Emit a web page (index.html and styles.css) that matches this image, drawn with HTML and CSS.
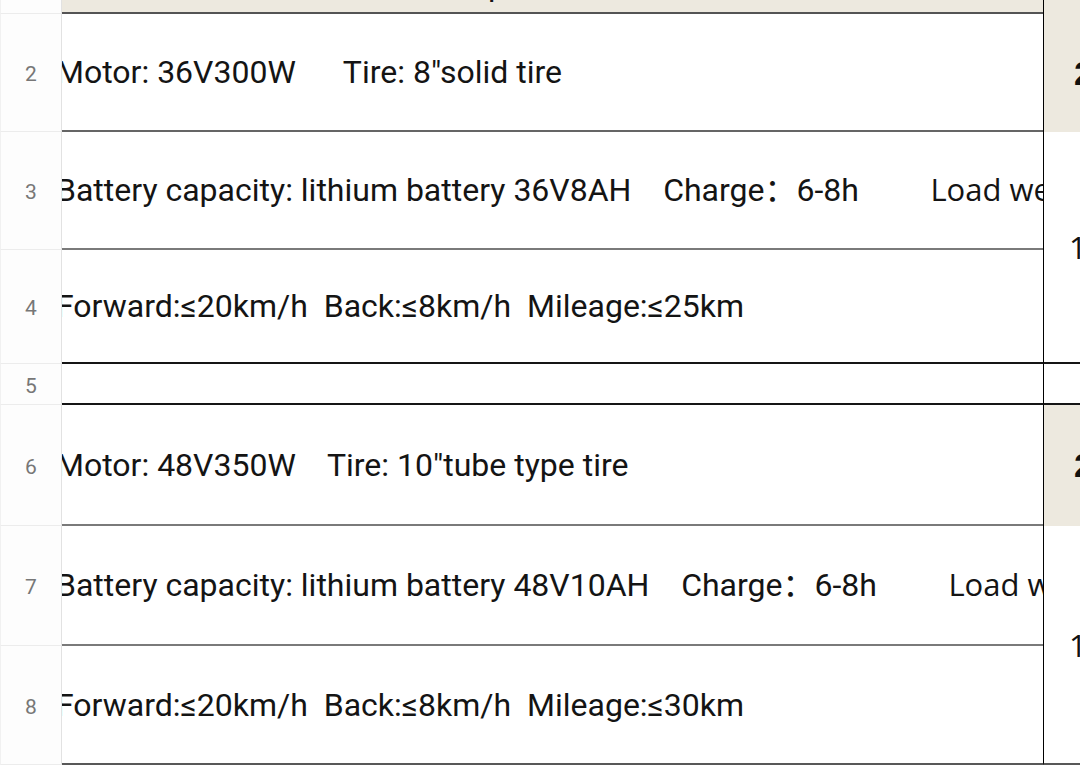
FILE: index.html
```html
<!DOCTYPE html>
<html>
<head>
<meta charset="utf-8">
<link rel="stylesheet" href="styles.css">
</head>
<body>
<div class="sheet">
  <div class="rh r1"></div>
  <div class="cell r1 beige top"><span class="clip-top">Specification</span></div>
  <div class="bcol b1 beige"></div>

  <div class="rh r2">2</div>
  <div class="cell r2 line-2"><span class="txt">Motor: 36V300W      Tire: 8"solid tire</span></div>
  <div class="bcol b2 beige"><span class="bold">2</span></div>

  <div class="rh r3">3</div>
  <div class="cell r3 line-3"><span class="txt raised">Battery capacity: lithium battery 36V8AH    Charge：6-8h         <span class="alt">Load weight</span></span></div>
  <div class="bcol b34 line-dark"><span class="light">1</span></div>

  <div class="rh r4">4</div>
  <div class="cell r4 line-dark"><span class="txt">Forward:≤20km/h  Back:≤8km/h  Mileage:≤25km</span></div>

  <div class="rh r5">5</div>
  <div class="cell r5 line-dark"></div>
  <div class="bcol b5 line-dark"></div>

  <div class="rh r6">6</div>
  <div class="cell r6 line-3"><span class="txt">Motor: 48V350W    Tire: 10"tube type tire</span></div>
  <div class="bcol b6 beige"><span class="bold">2</span></div>

  <div class="rh r7">7</div>
  <div class="cell r7 line-3"><span class="txt raised">Battery capacity: lithium battery 48V10AH    Charge：6-8h         <span class="alt">Load weight</span></span></div>
  <div class="bcol b78 line-end"><span class="light">1</span></div>

  <div class="rh r8">8</div>
  <div class="cell r8 line-end"><span class="txt">Forward:≤20km/h  Back:≤8km/h  Mileage:≤30km</span></div>
</div>
</body>
</html>
```

FILE: styles.css
```css
html, body {
  margin: 0;
  padding: 0;
  background: #ffffff;
}

body {
  width: 1080px;
  height: 765px;
  overflow: hidden;
  font-family: Roboto, "Noto Sans CJK SC", sans-serif;
}

.sheet {
  display: grid;
  grid-template-columns: 62px 981px 37px;
  grid-template-rows: 14px 118px 118px 114px 41px 121px 120px 119px;
  width: 1080px;
  height: 765px;
}

.r1 { grid-row: 1; }
.r2 { grid-row: 2; }
.r3 { grid-row: 3; }
.r4 { grid-row: 4; }
.r5 { grid-row: 5; }
.r6 { grid-row: 6; }
.r7 { grid-row: 7; }
.r8 { grid-row: 8; }

/* row headers */
.rh {
  grid-column: 1;
  box-sizing: border-box;
  background: #fdfdfd;
  border-left: 1px solid #f1f1f1;
  border-right: 1px solid #e2e2e2;
  border-bottom: 1px solid #ececec;
  display: flex;
  align-items: center;
  justify-content: center;
  padding-top: 3px;
  font-size: 21px;
  color: #777777;
}

/* main column */
.cell {
  grid-column: 2;
  box-sizing: border-box;
  overflow: hidden;
  display: flex;
  align-items: center;
  white-space: pre;
  font-size: 32px;
  color: #141414;
}

.cell .txt {
  margin-left: -6px;
}

.cell .raised {
  margin-bottom: 6px;
}

.beige {
  background: #ede9df;
}

.top {
  align-items: flex-start;
  border-bottom: 2px solid #545454;
}

.clip-top {
  margin-left: 407px;
  margin-top: -34px;
  line-height: 38px;
}

.line-2 { border-bottom: 2px solid #656565; }
.line-3 { border-bottom: 2px solid #7a7a7a; }
.line-dark { border-bottom: 2px solid #151515; }
.line-end { border-bottom: 2px solid #585858; }

.alt {
  font-family: "Open Sans", sans-serif;
  font-size: 31px;
}

/* right column */
.bcol {
  grid-column: 3;
  box-sizing: border-box;
  border-left: 1px solid #000000;
  overflow: hidden;
  display: flex;
  align-items: center;
  white-space: pre;
}

.b1 { grid-row: 1; }
.b2 { grid-row: 2; }
.b34 { grid-row: 3 / 5; }
.b5 { grid-row: 5; }
.b6 { grid-row: 6; }
.b78 { grid-row: 7 / 9; }

.bold {
  font-family: "Liberation Sans", Arial, sans-serif;
  font-weight: bold;
  font-size: 34px;
  color: #111;
  padding-left: 30px;
}

.light {
  font-family: "Open Sans", sans-serif;
  font-size: 31px;
  color: #111;
  padding-left: 25px;
}
```
